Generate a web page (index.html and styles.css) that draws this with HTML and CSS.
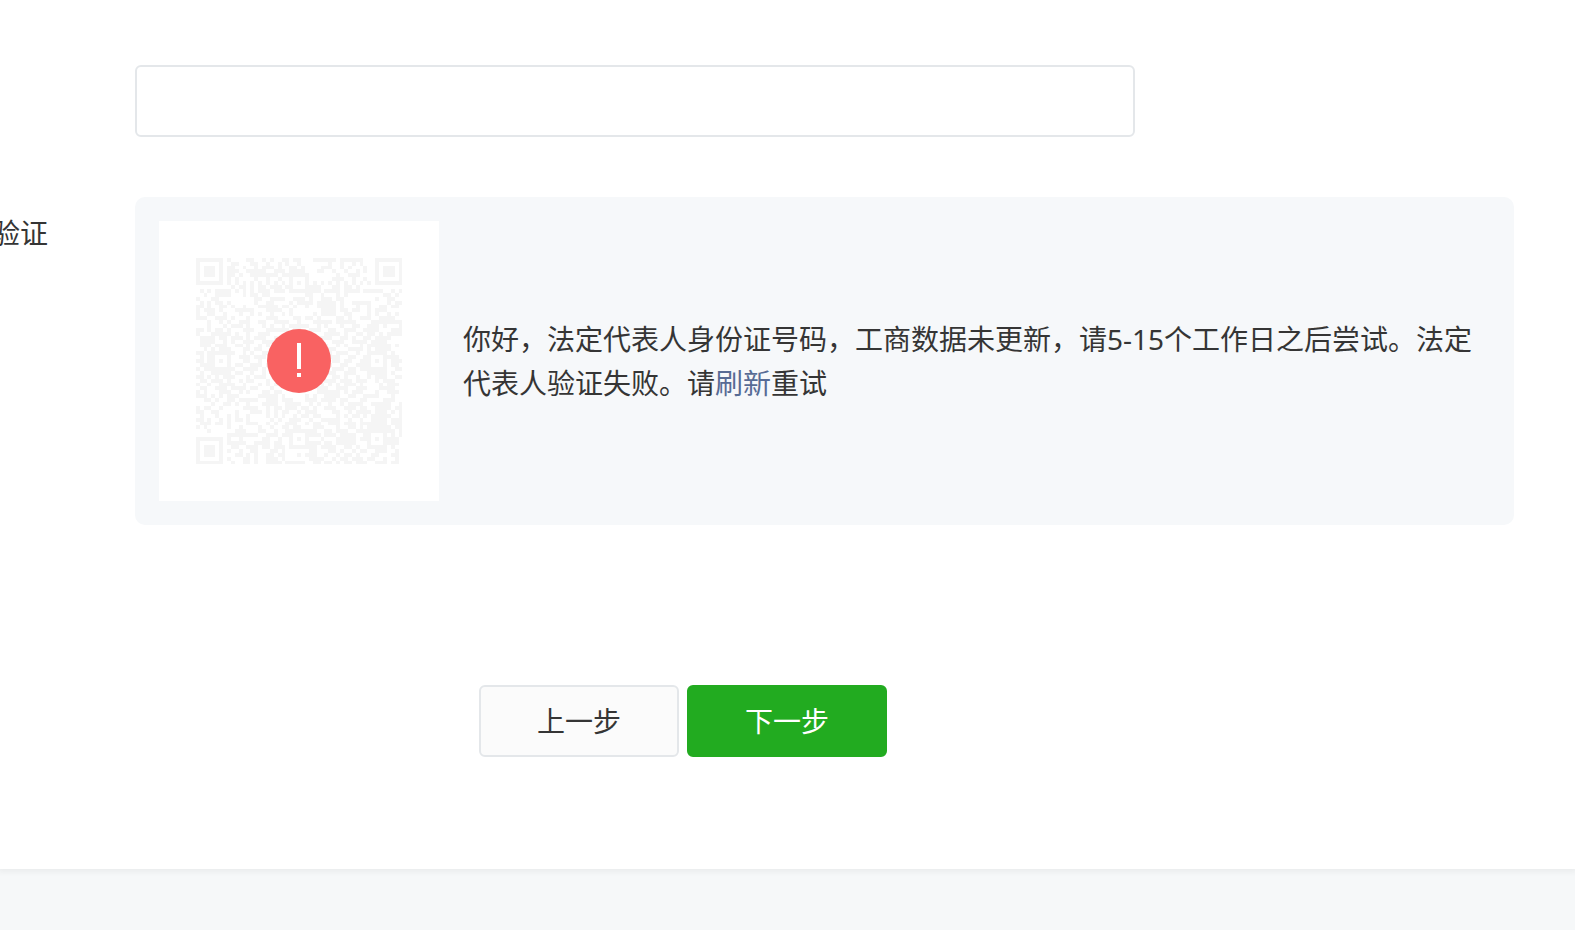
FILE: index.html
```
<!DOCTYPE html>
<html lang="zh-CN">
<head>
<meta charset="utf-8">
<meta name="viewport" content="width=device-width, initial-scale=1">
<title>法定代表人验证</title>
<link rel="stylesheet" href="styles.css">
</head>
<body>
<main class="sheet">
  <form class="form">
    <div class="row">
      <input class="field" type="text" aria-label="身份证号码">
    </div>
    <div class="row">
      <div class="row-label" id="verify-label"><span>验证</span></div>
      <section class="panel" aria-labelledby="verify-label">
        <svg class="code" viewBox="0 0 280 280" role="img" aria-label="二维码已失效">
          <g transform="translate(36.7 36.7) scale(3.9)" fill="#f5f5f5" shape-rendering="crispEdges">
            <path id="modules" d=""/>
          </g>
          <circle cx="140" cy="140" r="32" fill="#f96262"/>
          <path d="M138 122h4v26h-4zM138 152h4v4h-4z" fill="#fff"/>
        </svg>
        <p class="message">你好，法定代表人身份证号码，工商数据未更新，请5-15个工作日之后尝试。法定代表人验证失败。请<a class="link" href="#refresh">刷新</a>重试</p>
      </section>
    </div>
    <div class="actions">
      <button class="button" type="button">上一步</button>
      <button class="button button-primary" type="submit">下一步</button>
    </div>
  </form>
</main>
<script src="code.js"></script>
</body>
</html>
```

FILE: styles.css
```
* {
  box-sizing: border-box;
}

body {
  margin: 0;
  min-height: 100vh;
  background: #f6f8f9;
  color: #353535;
  font-family: "Noto Sans", "Noto Sans CJK SC", sans-serif;
  font-size: 28px;
  line-height: 44px;
  overflow-x: hidden;
}

.sheet {
  padding: 65px 61px 112px 0;
  background: #fff;
  box-shadow: 0 1px 6px 2px rgba(0, 0, 0, 0.05);
}

.form {
  display: flex;
  flex-direction: column;
  gap: 60px;
}

.row {
  display: grid;
  grid-template-columns: 135px minmax(0, 1fr);
}

.field {
  grid-column: 2;
  width: 100%;
  max-width: 1000px;
  height: 72px;
  padding: 0 20px;
  border: 2px solid #e4e7ea;
  border-radius: 6px;
  background: #fff;
  color: inherit;
  font: inherit;
}

.row-label {
  display: flex;
  justify-content: flex-end;
  width: 48px;
  padding-top: 14px;
  white-space: nowrap;
}

.panel {
  display: flex;
  align-items: center;
  gap: 24px;
  padding: 24px;
  border-radius: 10px;
  background: #f6f8fa;
}

.code {
  flex: none;
  width: 280px;
  height: 280px;
  background: #fff;
}

.message {
  margin: 0;
}

.link {
  color: #576b95;
  text-decoration: none;
}

.actions {
  display: flex;
  gap: 8px;
  margin-top: 100px;
  padding-left: 479px;
}

.button {
  width: 200px;
  height: 72px;
  padding: 0;
  border: 2px solid #e4e7ea;
  border-radius: 6px;
  background: #fbfbfb;
  color: #353535;
  font: inherit;
  cursor: pointer;
}

.button-primary {
  border-color: #22ab20;
  background: #22ab20;
  color: #fff;
}
```

FILE: code.js
```
// Dark modules of the 53 x 53 code: one line per row, single columns or ranges.
const rows = `8 13-14 17 19 22-23 25-26 30-35 37-42
9-10 14-15 18 21 23 26 34 37 40 42
8-9 12 15 17-19 21 24-25 27 32-34 37 39 43
8-10 13-17 20-22 24-27 31-32 35 38 41 43
8-9 11 14-20 22-23 25-28 36 39-41
8 10 15 18 21 24-28 35-37 40 43
8 10 12 14 16 18 20 22 24 28 30 32 34 36 38 40 42 44
9 11-12 14 16-17 19-21 23-24 28-31 35-36 38-39 41
1 3 5-8 10 12 14 16-18 20-22 24-31 33-36 38-41 43-47 50 52
2 5-8 12 14-15 17-18 28-29 32 36 38 48-49 51
0 4-5 15-16 19-22 25-27 29 32-34 36-37 46 49-50
1 3 5-6 8 15 18-19 24 26-29 31-35 37 40-44 49 51-52
0-1 3 6-7 9 12 16-20 22-23 25 28 31-35 37 41 44 47-48 50-51
0 2-4 6 10-14 18-21 24 32-35 37-38 40-41 44 46-48
0 3-4 7 11 14 16 19 22 24 30 32-35 38-39 44 46 49 51
0-2 5-7 9 13 18-20 25-26 28-29 31 36-37 39 42-44 47-50
3 6 8 11-13 16-17 20-23 26 30-34 36-40 45-52
3 7 9-11 13 17 19 22 24-28 31 33 37 40-41 44-46 48 52
0-1 3 5-6 8 12-14 18-23 25-26 29-31 34-35 38-40 43-46 50-52
0 4-8 10 13 16-18 23-25 27 29 33-36 38 41-42 44-45 47 49-52
1-4 6-7 9-11 13 15-17 20 22 28 31-34 37-38 40 43-44 46-49
1-4 7 9 12-14 17-19 24-27 32 35-37 40-43 45-48
1-3 5-7 10-11 13 16 18 21-22 29-33 36 38 42 44-49 51
2 4 6-8 12-13 15-16 19 21 33-35 39-42 44 46-49
0 1 3-4 6-9 12 14 17-18 20 34 36-38 41 44-48 50
1 3-8 11-13 15-17 34-36 39-40 43-44 48-51
0-1 3-4 8 12-13 16 35-36 38-39 42-44 48 50-52
1-3 8 10-11 14-16 18 34 37-38 41-44 48 50-51
0 2-4 8-9 12-15 17 35-37 39-40 42-44 48 51-52
1 4-8 10-11 14 17 34-35 38-40 44-48 50
0-1 3 5 7-9 13 15-17 35-36 38 41 44 46-48 51-52
1-2 4-6 8 11 13-14 18 33-35 37-39 41-43 46 48-50
0 3 6-9 12 16 18 20 32 34 36 38-40 42 47 49-51
1 2 5-7 9-12 14-15 19 31-33 36-38 41-43 47-50
0 2 6-8 11 13 17-18 20-21 31-36 38 40-42 46 49-51
0-2 4 6 8-10 16-20 22 28 30 33-36 39-40 43-46 50
2-3 5 8-9 11-15 18-20 22-24 28-30 32-35 37-38 42-43 48-50
4 7-8 10 13 17-20 23-26 29 31 34 37 39-42 45-49 52
0 2-3 6 12-15 18 20-21 23-25 27-28 30 33-35 38-40 42-43 46-49 51-52
0-1 4-5 10 14-16 18 20 22-23 26 28-30 35-36 39 41-44 46-48 50 52
1 5 8 10 13 18 20 22 25 27-28 30-31 36 38 40-41 43 45-49 52
0-1 3 6 8 10-11 13 19 21 24-26 29 32-36 39 42 45-48 50-52
1-3 5-6 8 13-15 18 20 23-25 28 30-31 34-36 38-40 42-48 50-52
0 2 8 11 16 19 22-23 25-26 30-32 36 39-40 42 44-49 51-52
3 10-12 16-17 20 23-24 28-30 33-34 36-38 41-43 45-50 52
8-15 18-20 22-24 28-31 33-35 37-40 43-44 48 50 52
8 11 17-18 21 24 28 32 36-40 42-44 48-51
8-12 15-18 20-21 24 28-31 33-34 36-40 44 48-51
9-10 13-15 17-18 20-22 24-30 32-35 38-39 41 44-48 50
8 11 14-15 19-20 22 29-30 34-35 37 40 42-43 46-48 51
10-11 13 15 18-19 21-22 26 28-30 33 36 38-39 41 45-46 50-51
8 12-13 15 18-20 22 29-32 35 37-38 40-42 44-45 48 51
9 12-13 15 18-21 23-27 30-31 33-34 36 38-39 41-43 46-48 50-51`;

const alignments = [[24, 4], [4, 24], [44, 24], [24, 44], [44, 44]];
const inAlignment = (col, row) => alignments.some(([x, y]) =>
  col >= x && col < x + 5 && row >= y && row < y + 5);

let d = "";
rows.split("\n").forEach((line, y) => {
  for (const run of line.split(" ")) {
    const [from, to = from] = run.split("-").map(Number);
    for (let x = from; x <= to; x++) {
      if (!inAlignment(x, y)) d += `M${x} ${y}h1v1h-1z`;
    }
  }
});

// Finder squares in three corners.
for (const [x, y] of [[0, 0], [46, 0], [0, 46]]) {
  d += `M${x} ${y}h7v7h-7zM${x + 1} ${y + 1}v5h5v-5zM${x + 2} ${y + 2}h3v3h-3z`;
}

// Alignment squares.
for (const [x, y] of alignments) {
  d += `M${x} ${y}h5v5h-5zM${x + 1} ${y + 1}v3h3v-3zM${x + 2} ${y + 2}h1v1h-1z`;
}

document.getElementById("modules").setAttribute("d", d);
```
